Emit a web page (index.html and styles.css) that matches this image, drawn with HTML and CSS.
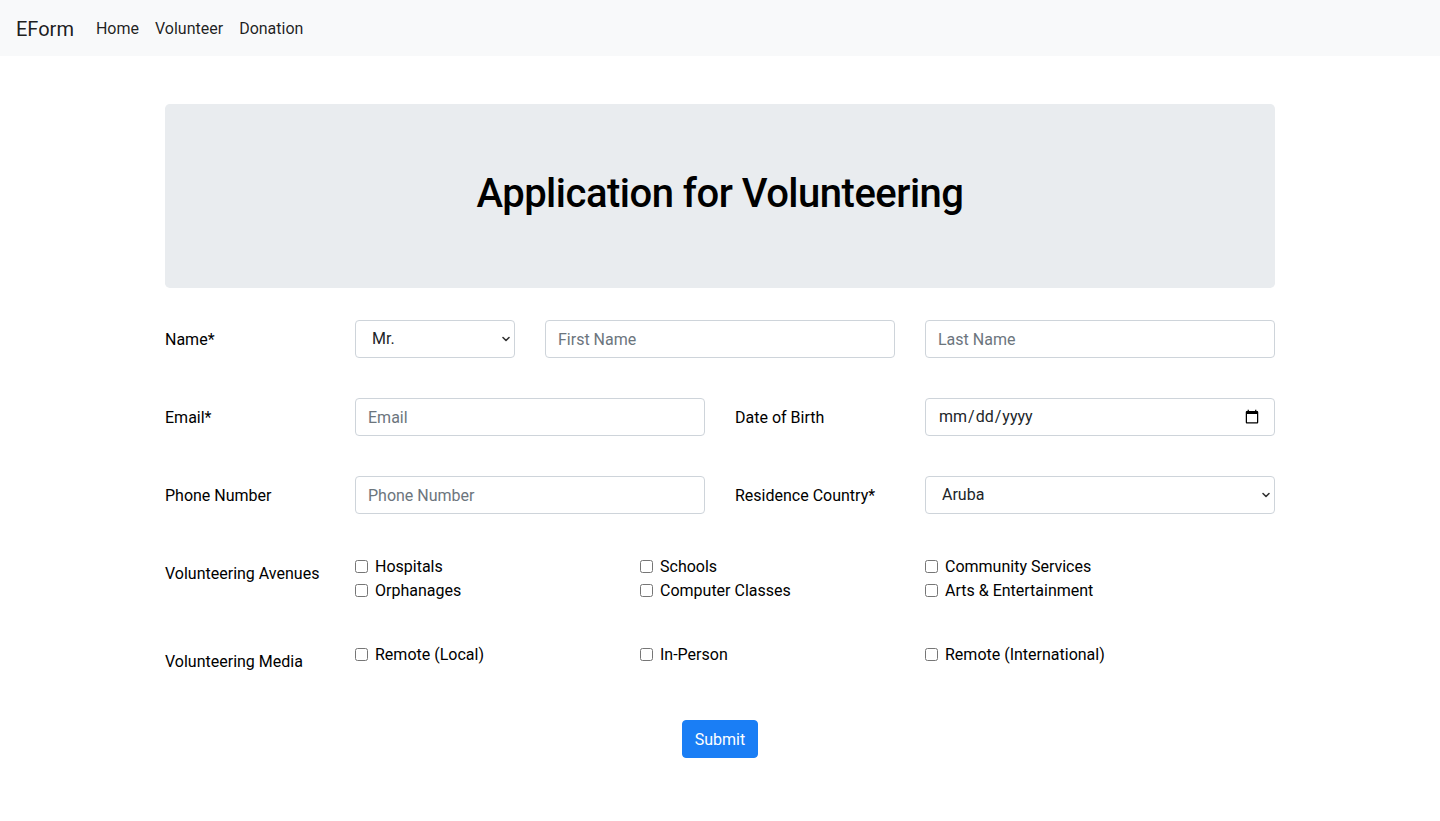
FILE: index.html
```html
<!DOCTYPE html>
<html lang="en">
<head>
<meta charset="utf-8">
<title>EForm - Volunteer</title>
<link rel="stylesheet" href="styles.css">
</head>
<body>
<nav class="navbar">
  <a class="brand" href="#">EForm</a>
  <ul class="nav">
    <li><a class="nav-link" href="#">Home</a></li>
    <li><a class="nav-link" href="#">Volunteer</a></li>
    <li><a class="nav-link" href="#">Donation</a></li>
  </ul>
</nav>
<main class="container">
  <div class="jumbotron">
    <h1 class="title">Application for Volunteering</h1>
  </div>
  <form class="form">
    <div class="row">
      <label class="col col-2 col-label">Name*</label>
      <div class="col col-2">
        <div class="select-wrap">
          <select class="control select">
            <option>Mr.</option>
            <option>Mrs.</option>
            <option>Ms.</option>
          </select>
          <svg class="chev" width="10" height="10" viewBox="0 0 10 10"><path d="M2 3.5 L5 6.5 L8 3.5" fill="none" stroke="#333" stroke-width="1.6" stroke-linecap="round" stroke-linejoin="round"/></svg>
        </div>
      </div>
      <div class="col col-4"><input class="control" type="text" placeholder="First Name"></div>
      <div class="col col-4"><input class="control" type="text" placeholder="Last Name"></div>
    </div>
    <div class="row">
      <label class="col col-2 col-label">Email*</label>
      <div class="col col-4"><input class="control" type="email" placeholder="Email"></div>
      <label class="col col-2 col-label">Date of Birth</label>
      <div class="col col-4"><input class="control date" type="date"></div>
    </div>
    <div class="row">
      <label class="col col-2 col-label">Phone Number</label>
      <div class="col col-4"><input class="control" type="tel" placeholder="Phone Number"></div>
      <label class="col col-2 col-label">Residence Country*</label>
      <div class="col col-4">
        <div class="select-wrap">
          <select class="control select">
            <option>Aruba</option>
            <option>Afghanistan</option>
            <option>Albania</option>
          </select>
          <svg class="chev" width="10" height="10" viewBox="0 0 10 10"><path d="M2 3.5 L5 6.5 L8 3.5" fill="none" stroke="#333" stroke-width="1.6" stroke-linecap="round" stroke-linejoin="round"/></svg>
        </div>
      </div>
    </div>
    <div class="row">
      <label class="col col-2 col-label">Volunteering Avenues</label>
      <div class="col col-3">
        <label class="check"><input type="checkbox"><span>Hospitals</span></label>
        <label class="check"><input type="checkbox"><span>Orphanages</span></label>
      </div>
      <div class="col col-3">
        <label class="check"><input type="checkbox"><span>Schools</span></label>
        <label class="check"><input type="checkbox"><span>Computer Classes</span></label>
      </div>
      <div class="col col-3">
        <label class="check"><input type="checkbox"><span>Community Services</span></label>
        <label class="check"><input type="checkbox"><span>Arts &amp; Entertainment</span></label>
      </div>
    </div>
    <div class="row">
      <label class="col col-2 col-label">Volunteering Media</label>
      <div class="col col-3">
        <label class="check"><input type="checkbox"><span>Remote (Local)</span></label>
      </div>
      <div class="col col-3">
        <label class="check"><input type="checkbox"><span>In-Person</span></label>
      </div>
      <div class="col col-3">
        <label class="check"><input type="checkbox"><span>Remote (International)</span></label>
      </div>
    </div>
    <div class="actions">
      <button type="submit" class="btn">Submit</button>
    </div>
  </form>
</main>
</body>
</html>
```
FILE: styles.css
```css
* { box-sizing: border-box; }
html, body { margin: 0; padding: 0; }
body {
  font-family: Roboto, Inter, "Liberation Sans", sans-serif;
  font-size: 16px;
  line-height: 1.5;
  color: #000;
  background: #fff;
}
.navbar {
  display: flex;
  align-items: center;
  height: 56px;
  padding: 9px 16px 7px;
  background: #f8f9fa;
}
.brand {
  font-size: 20px;
  line-height: 30px;
  color: rgba(0,0,0,.9);
  text-decoration: none;
  margin-right: 14px;
  padding: 5px 0;
}
.nav {
  display: flex;
  list-style: none;
  margin: 0;
  padding: 0;
}
.nav-link {
  display: block;
  padding: 8px 8px;
  color: rgba(0,0,0,.88);
  text-decoration: none;
}
.container {
  width: 1140px;
  margin: 48px auto 0;
  padding: 0 15px;
}
.jumbotron {
  background: #e9ecef;
  border-radius: 4.8px;
  padding: 64px 32px;
  margin-bottom: 32px;
}
.title {
  margin: 0 0 8px;
  padding-top: 2px;
  height: 48px;
  font-size: 40px;
  font-weight: 500;
  line-height: 1.2;
  letter-spacing: -0.5px;
  text-align: center;
  color: #000;
}
.row {
  display: flex;
  margin: 0 -15px 40px;
}
.col { padding: 0 15px; }
.col-2 { flex: 0 0 16.666667%; max-width: 16.666667%; }
.col-3 { flex: 0 0 25%; max-width: 25%; }
.col-4 { flex: 0 0 33.333333%; max-width: 33.333333%; }
.col-label {
  padding-top: 8px;
  padding-bottom: 6px;
  line-height: 1.5;
  white-space: nowrap;
}
.control {
  display: block;
  width: 100%;
  height: 38px;
  padding: 6px 12px;
  font-family: inherit;
  font-size: 16px;
  line-height: 1.5;
  color: #495057;
  background: #fff;
  border: 1px solid #ced4da;
  border-radius: 4px;
  outline: none;
}
.control::placeholder { color: #6c757d; opacity: 1; }
.select-wrap { position: relative; }
.select {
  appearance: none;
  -webkit-appearance: none;
  padding-left: 16px;
  padding-right: 28px;
  color: #212529;
}
.chev {
  position: absolute;
  right: 4px;
  top: 14px;
  pointer-events: none;
}
.date { color: #212529; }
.check {
  display: flex;
  align-items: center;
  height: 24px;
}
.check input {
  width: 13px;
  height: 13px;
  margin: 0 7px 0 0;
}
.check span { color: #000; padding-top: 2px; }
.actions {
  display: flex;
  justify-content: center;
}
.btn {
  font-family: inherit;
  font-size: 16px;
  line-height: 1.5;
  padding: 7px 12px 5px;
  color: #fff;
  background: #1a7ef5;
  border: 1px solid #1a7ef5;
  border-radius: 4px;
  cursor: pointer;
}
```
